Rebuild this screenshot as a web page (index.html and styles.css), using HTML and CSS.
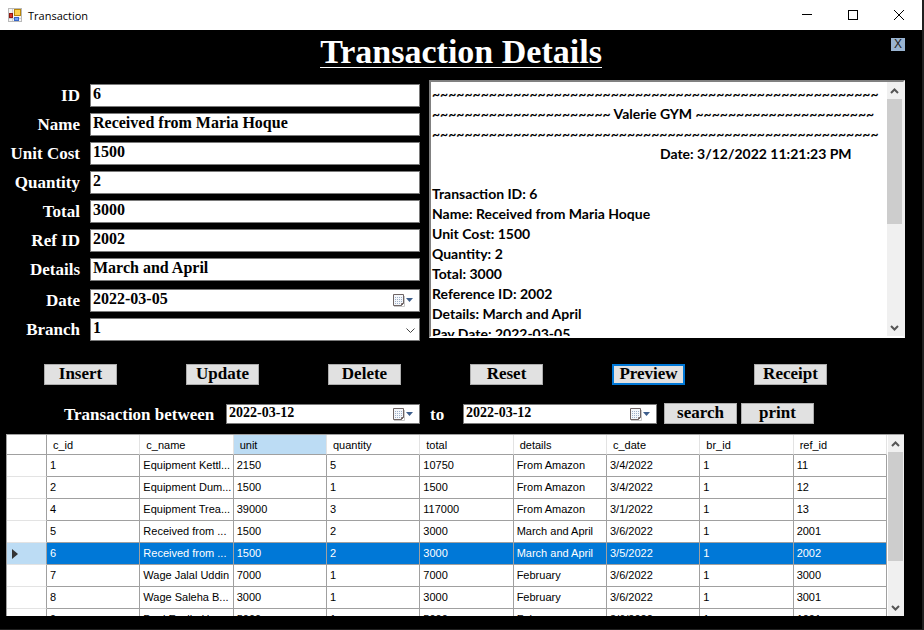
FILE: index.html
```
<!DOCTYPE html>
<html lang="en">
<head>
<meta charset="utf-8">
<title>Transaction</title>
<link rel="stylesheet" href="styles.css">
</head>
<body>
<div class="window">
  <header class="titlebar">
    <svg class="app-icon" width="14" height="14" viewBox="0 0 14 14" aria-hidden="true">
      <rect x="0.5" y="0.5" width="13" height="13" fill="#f4f4f4" stroke="#b9b9b9"/>
      <path d="M4.500 1V13M1 10.500H13" stroke="#cfcfcf"/>
      <rect x="6.500" y="1.500" width="6" height="6" fill="#fbd24c" stroke="#b8860b"/>
      <rect x="1.500" y="5.500" width="3" height="4" fill="#d8372a" stroke="#8e1a12"/>
      <rect x="6.500" y="9.500" width="4" height="3" fill="#6ea0f0" stroke="#3766c8"/>
    </svg>
    <span class="window-title">Transaction</span>
    <div class="window-controls">
      <button class="caption-button" type="button" aria-label="Minimize"><svg width="10" height="10" viewBox="0 0 10 10"><path d="M0 4.500H10" stroke="#000"/></svg></button>
      <button class="caption-button" type="button" aria-label="Maximize"><svg width="10" height="10" viewBox="0 0 10 10"><rect x="0.500" y="0.500" width="9" height="9" fill="none" stroke="#000"/></svg></button>
      <button class="caption-button" type="button" aria-label="Close window"><svg width="10" height="10" viewBox="0 0 10 10"><path d="M0 0L10 10M10 0L0 10" stroke="#000"/></svg></button>
    </div>
  </header>

  <main class="client">
    <div class="heading">
      <h1>Transaction Details</h1>
      <button class="exit" type="button">X</button>
    </div>

    <section class="details">
      <form class="fields">
        <div class="row"><label for="id">ID</label><input id="id" value="6"></div>
        <div class="row"><label for="name">Name</label><input id="name" value="Received from Maria Hoque"></div>
        <div class="row"><label for="cost">Unit Cost</label><input id="cost" value="1500"></div>
        <div class="row"><label for="quantity">Quantity</label><input id="quantity" value="2"></div>
        <div class="row"><label for="total">Total</label><input id="total" value="3000"></div>
        <div class="row"><label for="ref">Ref ID</label><input id="ref" value="2002"></div>
        <div class="row"><label for="details">Details</label><input id="details" value="March and April"></div>
        <div class="row row-date"><label for="date">Date</label>
          <div class="picker"><input id="date" value="2022-03-05"><svg class="calendar"><use href="#calendar"/></svg></div>
        </div>
        <div class="row"><label for="branch">Branch</label>
          <div class="picker"><select id="branch"><option>1</option></select><svg class="chevron" width="9" height="6" viewBox="0 0 9 6"><path d="M0.500 0.500L4.500 4.500L8.500 0.500" fill="none" stroke="#444"/></svg></div>
        </div>
      </form>

      <div class="preview">
        <textarea aria-label="Receipt preview" readonly>~~~~~~~~~~~~~~~~~~~~~~~~~~~~~~~~~~~~~~~~~~~~~~~~~~~~~~~
~~~~~~~~~~~~~~~~~~~~~~ Valerie GYM ~~~~~~~~~~~~~~~~~~~~~~
~~~~~~~~~~~~~~~~~~~~~~~~~~~~~~~~~~~~~~~~~~~~~~~~~~~~~~~
                                                                   Date: 3/12/2022 11:21:23 PM

Transaction ID: 6
Name: Received from Maria Hoque
Unit Cost: 1500
Quantity: 2
Total: 3000
Reference ID: 2002
Details: March and April
Pay Date: 2022-03-05</textarea>
        <div class="scrollbar">
          <svg class="arrow"><use href="#arrow-up"/></svg>
          <div class="track"><div class="thumb"></div></div>
          <svg class="arrow"><use href="#arrow-down"/></svg>
        </div>
      </div>
    </section>

    <div class="actions">
      <button type="button">Insert</button>
      <button type="button">Update</button>
      <button type="button">Delete</button>
      <button type="button">Reset</button>
      <button class="focused" type="button">Preview</button>
      <button type="button">Receipt</button>
    </div>

    <form class="filter">
      <label class="between" for="from">Transaction between</label>
      <div class="picker"><input id="from" value="2022-03-12"><svg class="calendar"><use href="#calendar"/></svg></div>
      <label class="to" for="to">to</label>
      <div class="picker"><input id="to" value="2022-03-12"><svg class="calendar"><use href="#calendar"/></svg></div>
      <div class="filter-buttons">
        <button type="button">search</button>
        <button type="button">print</button>
      </div>
    </form>

    <section class="grid">
      <div class="viewport">
        <table>
          <colgroup><col class="selector"><col><col><col><col><col><col><col><col><col></colgroup>
          <thead><tr><th></th><th>c_id</th><th>c_name</th><th class="current">unit</th><th>quantity</th><th>total</th><th>details</th><th>c_date</th><th>br_id</th><th>ref_id</th></tr></thead>
          <tbody>
            <tr><th></th><td>1</td><td>Equipment Kettl...</td><td>2150</td><td>5</td><td>10750</td><td>From Amazon</td><td>3/4/2022</td><td>1</td><td>11</td></tr>
            <tr><th></th><td>2</td><td>Equipment Dum...</td><td>1500</td><td>1</td><td>1500</td><td>From Amazon</td><td>3/4/2022</td><td>1</td><td>12</td></tr>
            <tr><th></th><td>4</td><td>Equipment Trea...</td><td>39000</td><td>3</td><td>117000</td><td>From Amazon</td><td>3/1/2022</td><td>1</td><td>13</td></tr>
            <tr><th></th><td>5</td><td>Received from ...</td><td>1500</td><td>2</td><td>3000</td><td>March and April</td><td>3/6/2022</td><td>1</td><td>2001</td></tr>
            <tr class="selected"><th><svg width="6" height="10" viewBox="0 0 6 10"><path d="M0 0L6 5L0 10Z" fill="#333"/></svg></th><td>6</td><td>Received from ...</td><td>1500</td><td>2</td><td>3000</td><td>March and April</td><td>3/5/2022</td><td>1</td><td>2002</td></tr>
            <tr><th></th><td>7</td><td>Wage Jalal Uddin</td><td>7000</td><td>1</td><td>7000</td><td>February</td><td>3/6/2022</td><td>1</td><td>3000</td></tr>
            <tr><th></th><td>8</td><td>Wage Saleha B...</td><td>3000</td><td>1</td><td>3000</td><td>February</td><td>3/6/2022</td><td>1</td><td>3001</td></tr>
            <tr><th></th><td>9</td><td>Paul Evelin H...</td><td>5000</td><td>1</td><td>5000</td><td>February</td><td>3/6/2022</td><td>1</td><td>1001</td></tr>
          </tbody>
        </table>
      </div>
      <div class="scrollbar">
        <svg class="arrow"><use href="#arrow-up"/></svg>
        <div class="track"><div class="thumb"></div></div>
        <svg class="arrow"><use href="#arrow-down"/></svg>
      </div>
    </section>
  </main>
</div>

<svg class="symbols" aria-hidden="true">
  <symbol id="calendar" viewBox="0 0 21 13">
    <path d="M1 12.500H11.500V2" fill="none" stroke="#c8c8c8"/>
    <path d="M0.500 0.500H10.500V9.500L8.500 11.500H0.500Z" fill="#f4f7fb" stroke="#6e6464"/>
    <path d="M2 3.500H9M2 5.500H9M2 7.500H9M2 9.500H8" stroke="#9fb0c8" stroke-dasharray="1 1"/>
    <path d="M10.500 9.500H8.500V11.500" fill="none" stroke="#6e6464"/>
    <path d="M13 4H20L16.500 8Z" fill="#3d5e8c"/>
  </symbol>
  <symbol id="arrow-up" viewBox="0 0 15 17"><path d="M4 11L7.500 7.500L11 11" fill="none" stroke="#555" stroke-width="2"/></symbol>
  <symbol id="arrow-down" viewBox="0 0 15 17"><path d="M4 7L7.500 10.500L11 7" fill="none" stroke="#555" stroke-width="2"/></symbol>
</svg>
</body>
</html>
```
FILE: styles.css
```
* {
  box-sizing: border-box;
}

body {
  margin: 0;
  background: #000;
}

button,
input,
select,
textarea {
  margin: 0;
  border-radius: 0;
  outline: none;
}

.window {
  display: flex;
  flex-direction: column;
  height: 100vh;
  background: #000;
  border-right: 2px solid #202020;
  border-bottom: 1px solid #202020;
}

.symbols {
  position: absolute;
  width: 0;
  height: 0;
}

/* Title bar */

.titlebar {
  display: flex;
  align-items: center;
  flex: none;
  height: 30px;
  padding-left: 8px;
  background: #fff;
}

.window-title {
  margin-left: 6px;
  font: 11px "Open Sans", "Noto Sans", sans-serif;
}

.window-controls {
  display: flex;
  align-self: stretch;
  margin-left: auto;
}

.caption-button {
  display: flex;
  align-items: center;
  justify-content: center;
  width: 46px;
  padding: 0;
  border: 0;
  background: none;
}

/* Heading */

.client {
  display: flex;
  flex: 1;
  flex-direction: column;
  min-height: 0;
  padding-bottom: 13px;
}

.heading {
  display: flex;
  align-items: flex-start;
  justify-content: center;
  position: relative;
  flex: none;
  height: 50px;
  padding-top: 6px;
}

h1 {
  margin: 0;
  border-bottom: 1px solid #fff;
  color: #fff;
  font: bold 34px/31px "Liberation Serif", serif;
}

.exit {
  position: absolute;
  top: 8px;
  right: 17px;
  width: 14px;
  height: 13px;
  padding: 0;
  border: 0;
  background: #99b4d1;
  color: #222;
  font: 12px/13px "Liberation Sans", sans-serif;
}

/* Form and preview */

.details {
  display: flex;
  flex: none;
  gap: 9px;
  height: 258px;
  padding: 0 17px 0 7px;
}

.fields {
  display: flex;
  flex: 413 1 0;
  flex-direction: column;
  gap: 6px;
  padding-top: 4px;
}

.row {
  display: flex;
  align-items: center;
  gap: 10px;
}

.row-date {
  margin-top: 2px;
}

.row label {
  width: 73px;
  text-align: right;
}

label {
  color: #fff;
  font: bold 17px/20px "Liberation Serif", serif;
  white-space: nowrap;
}

.row > input,
.picker {
  flex: 1;
  min-width: 0;
  height: 23px;
}

.row input,
.row select {
  padding: 0 2px 3px;
  border: 1px solid #7a7a7a;
  background: #fff;
  color: #000;
  font: bold 16px/18px "Liberation Serif", serif;
}

.picker {
  position: relative;
}

.picker input,
.picker select {
  display: block;
  width: 100%;
  height: 100%;
}

.picker select {
  appearance: none;
}

.calendar {
  position: absolute;
  top: 5px;
  right: 6px;
  width: 21px;
  height: 13px;
}

.chevron {
  position: absolute;
  top: 10px;
  right: 5px;
}

.preview {
  display: flex;
  flex: 472 1 0;
  border: 2px solid;
  border-color: #808080 #f0f0f0 #fff #808080;
  background: #fff;
}

.preview textarea {
  flex: 1;
  min-width: 0;
  padding: 2px 1px 0;
  border: 0;
  background: #fff;
  color: #000;
  font: bold 14px/20px Lato, sans-serif;
  white-space: pre;
  overflow: hidden;
  resize: none;
}

.scrollbar {
  display: flex;
  flex: none;
  flex-direction: column;
  width: 16px;
  background: #f0f0f0;
}

.arrow {
  flex: none;
  width: 15px;
  height: 17px;
}

.track {
  flex: 1;
}

.thumb {
  width: 15px;
  height: 57%;
  background: #cdcdcd;
}

.grid .thumb {
  height: 74%;
}

/* Buttons */

.actions {
  display: flex;
  flex: none;
  justify-content: space-between;
  padding: 26px 95px 0 44px;
}

.actions button,
.filter button {
  width: 73px;
  height: 21px;
  padding: 0 0 2px;
  border: 1px solid #adadad;
  background: #e1e1e1;
  color: #000;
  font: bold 17px/17px "Liberation Serif", serif;
}

.actions .focused {
  border-color: #0078d7;
  box-shadow: inset 0 0 0 1px #0078d7;
}

/* Date filter */

.filter {
  display: flex;
  flex: none;
  align-items: center;
  padding: 17px 108px 9px 64px;
}

.filter label {
  padding-top: 3px;
}

.filter .picker {
  height: 20px;
}

.filter .picker input {
  padding: 0 2px 2px;
  border: 1px solid #7a7a7a;
  background: #fff;
  color: #000;
  font: bold 14px/16px "Liberation Serif", serif;
}

.filter .calendar {
  top: 4px;
}

.between {
  width: 162px;
}

.to {
  width: 43px;
  padding-left: 10px;
}

.filter-buttons {
  display: flex;
  gap: 4px;
  margin-left: 7px;
}

/* Data grid */

.grid {
  display: flex;
  flex: 1;
  min-height: 0;
  margin: 0 18px 0 6px;
  border-top: 1px solid #a0a0a0;
  border-left: 1px solid #a0a0a0;
  background: #fff;
}

.viewport {
  flex: 1;
  min-width: 0;
  margin-right: 1px;
  overflow: hidden;
}

table {
  width: 100%;
  border-collapse: separate;
  border-spacing: 0;
  table-layout: fixed;
  color: #000;
  font: 11px/16px "Liberation Sans", sans-serif;
}

.selector {
  width: 40px;
}

th,
td {
  height: 22px;
  padding: 0 0 0 3px;
  border-right: 1px solid #a0a0a0;
  border-bottom: 1px solid #a0a0a0;
  font-weight: normal;
  text-align: left;
  white-space: nowrap;
  overflow: hidden;
}

td {
  padding-bottom: 2px;
}

thead th {
  height: 20px;
  padding-left: 6px;
  border-right-color: #e3e3e3;
}

thead th:first-child {
  border-right-color: #a0a0a0;
}

thead .current {
  background: #bcdcf4;
}

tbody th {
  padding-left: 5px;
  border-bottom-color: #e3e3e3;
}

tbody th svg {
  display: block;
}

.selected td {
  background: #0078d7;
  color: #fff;
}

.selected th {
  background: #bcdcf4;
}
```
